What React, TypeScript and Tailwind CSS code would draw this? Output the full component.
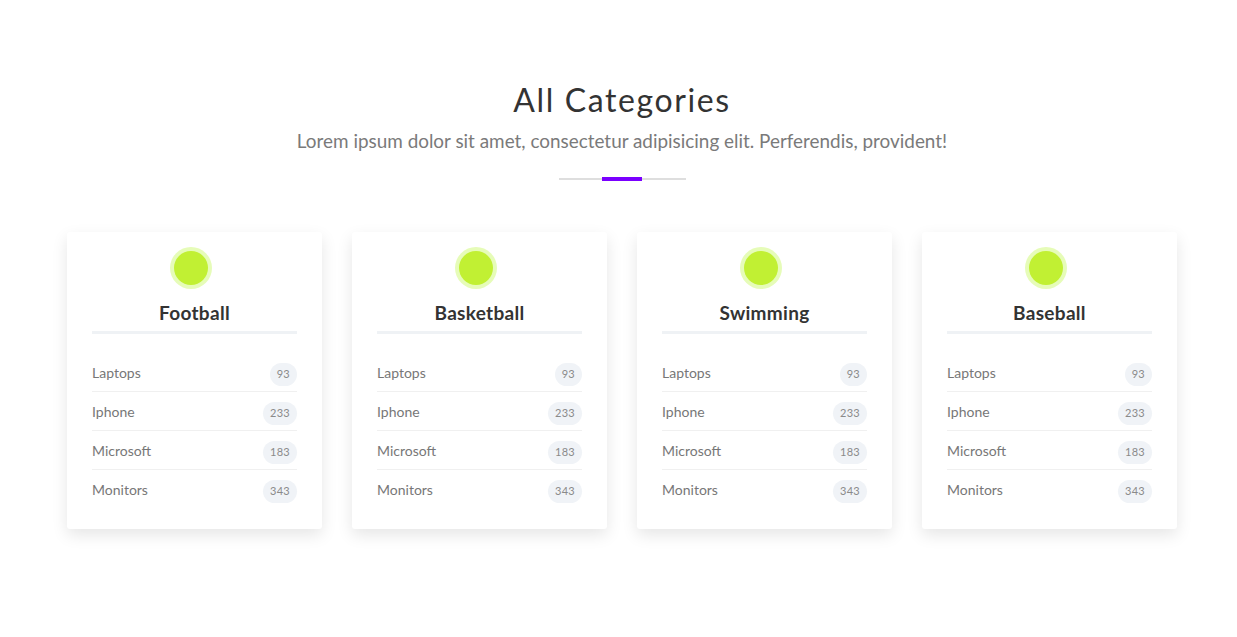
const CATEGORIES = ["Football", "Basketball", "Swimming", "Baseball"];

const ITEMS = [
  { name: "Laptops", count: 93 },
  { name: "Iphone", count: 233 },
  { name: "Microsoft", count: 183 },
  { name: "Monitors", count: 343 },
];

function CategoryCard({ title }: { title: string }) {
  return (
    <div className="w-[255px] rounded-[3px] bg-white px-[25px] pt-[15px] pb-[20px] shadow-[0_6px_16px_rgba(0,0,0,0.1)]">
      <div className="flex justify-center pr-[7px]">
        <div className="h-[42px] w-[42px] rounded-full bg-[#e6fcb8] p-[4px]">
          <div className="h-full w-full rounded-full bg-[#c1f033]" />
        </div>
      </div>
      <h3 className="mt-[11px] text-center text-[19px] font-bold leading-[26px] tracking-[0.3px] text-[#333]">{title}</h3>
      <div className="mt-[5px] h-[3px] bg-[#eff2f5]" />
      <ul className="mt-[19px]">
        {ITEMS.map((it, i) => (
          <li
            key={it.name}
            className={[
              "flex h-[39px] items-center justify-between",
              i < ITEMS.length - 1 ? "border-b border-[#f0f0f0]" : "",
            ].join(" ")}
          >
            <span className="text-[14px] text-[#777]">{it.name}</span>
            <span className="mt-1 flex h-[23px] items-center rounded-full bg-[#f0f3f7] px-[7px] text-[11px] tracking-[0.3px] text-[#8a8a8a]">
              {it.count}
            </span>
          </li>
        ))}
      </ul>
    </div>
  );
}

export default function App() {
  return (
    <div className="min-h-[637px] bg-white pl-[7px] pt-[80px] font-['Lato',sans-serif]">
      <div className="text-center">
        <h2 className="text-[32px] leading-[40px] tracking-[1.6px] text-[#333]">All Categories</h2>
        <p className="mt-[10px] text-[18.9px] leading-[22px] text-[#7a7a7a]">
          Lorem ipsum dolor sit amet, consectetur adipisicing elit. Perferendis, provident!
        </p>
        <div className="mt-[25px] flex justify-center">
          <div className="relative flex h-[4px] w-[127px] items-center">
            <div className="h-[2px] w-full bg-[#dedede]" />
            <div className="absolute left-[43px] top-0 h-[4px] w-[40px] bg-[#7a00ff]" />
          </div>
        </div>
      </div>
      <div className="mt-[51px] flex justify-center gap-[30px]">
        {CATEGORIES.map((c) => (
          <CategoryCard key={c} title={c} />
        ))}
      </div>
    </div>
  );
}
